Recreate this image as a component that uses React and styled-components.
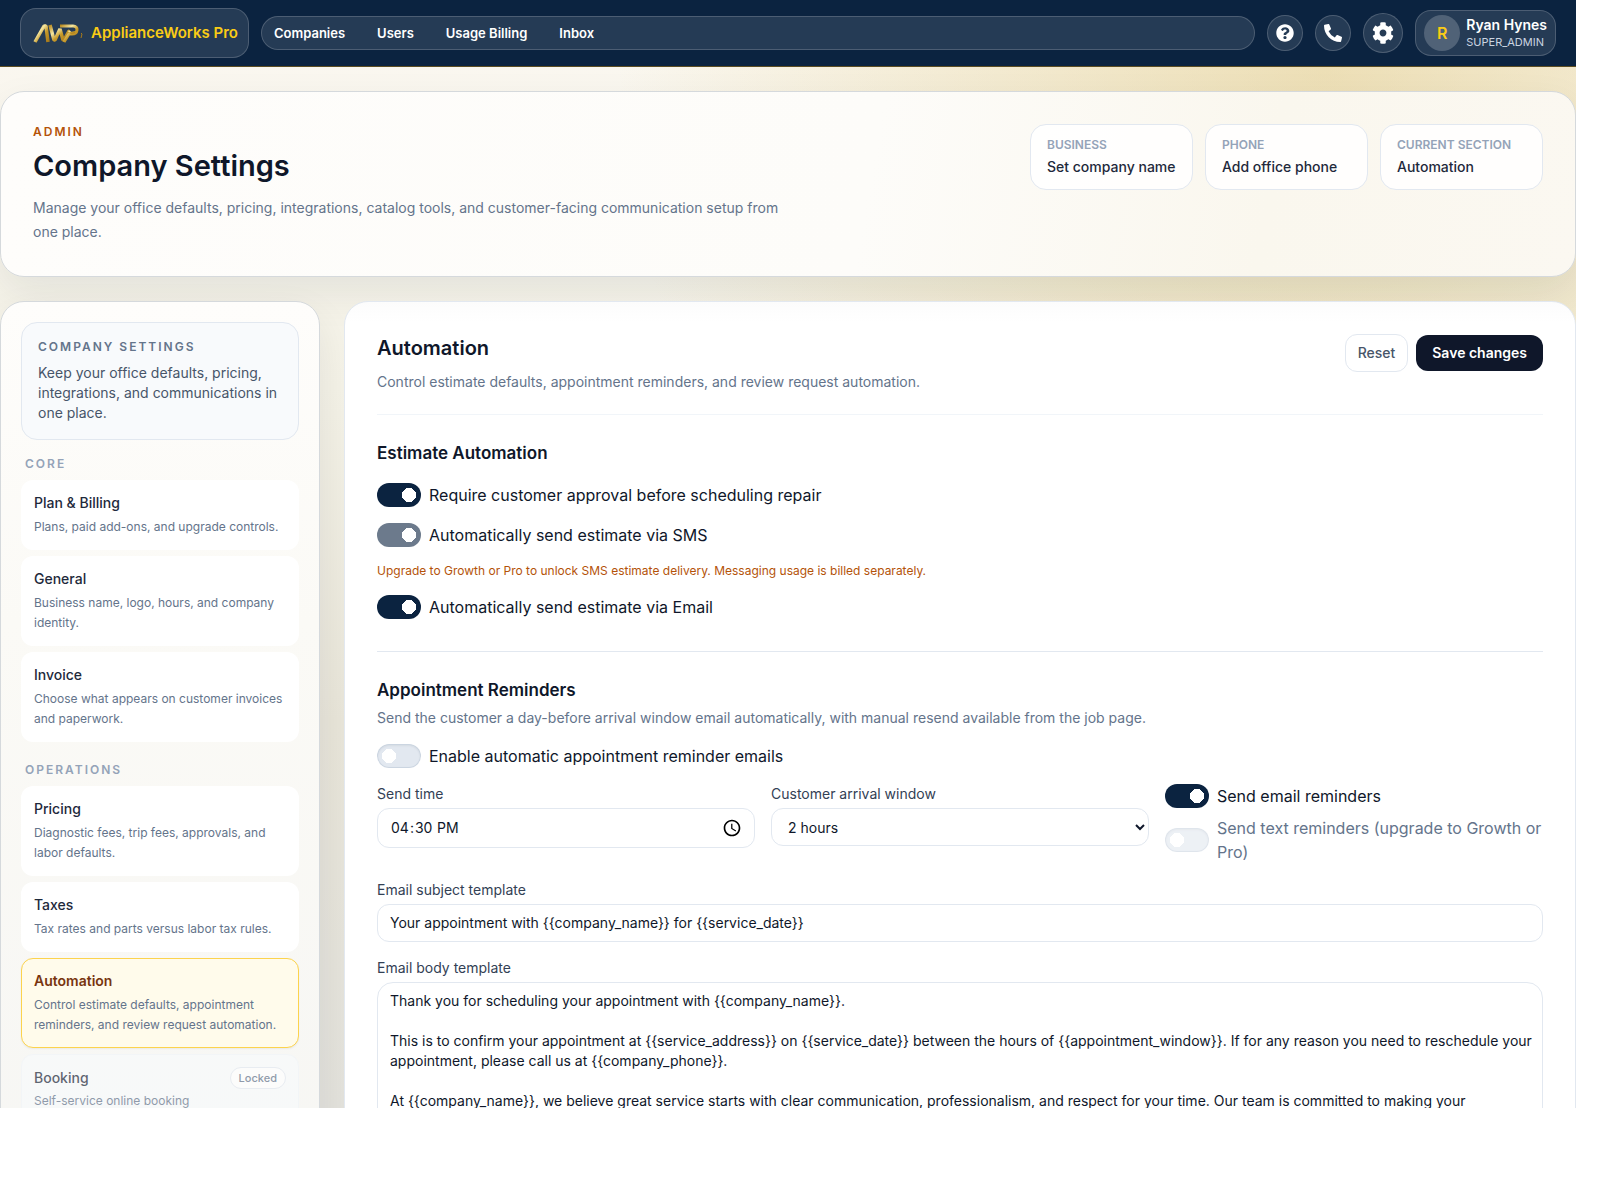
import { useState } from "react";
import styled, { createGlobalStyle, css } from "styled-components";
import { FaPhoneAlt, FaQuestionCircle, FaCog } from "react-icons/fa";

const GlobalStyle = createGlobalStyle`
  *, *::before, *::after {
    box-sizing: border-box;
  }
  body {
    margin: 0;
    background: #fff;
    color: #0f172a;
    font-family: Inter, "Open Sans", sans-serif;
    font-size: 16px;
    line-height: 24px;
  }
  button, input, select, textarea {
    font: inherit;
    color: inherit;
  }
  h1, h2, h3, p {
    margin: 0;
  }
  a {
    color: inherit;
    text-decoration: none;
  }
`;

const Frame = styled.div`
  height: 100vh;
  padding: 0 24px 92px 0;
  overflow: hidden;
`;

const Shell = styled.div`
  height: 100%;
  overflow: hidden;
  background:
    radial-gradient(circle at 84% 6%, rgba(214, 180, 80, 0.36), transparent 42%),
    linear-gradient(180deg, #fbf8f1 0%, #f4f2e7 35%, #e8e5d9 65%, #e3e2dc 100%);
`;

const TopBar = styled.header`
  display: flex;
  align-items: center;
  gap: 12px;
  height: 67px;
  padding: 0 20px;
  background: #0b2340;
  border-bottom: 1px solid #5c4d22;
`;

const glass = css`
  background: rgba(255, 255, 255, 0.11);
  border: 1px solid rgba(255, 255, 255, 0.18);
`;

const Brand = styled.a`
  ${glass}
  display: flex;
  align-items: center;
  gap: 8px;
  height: 50px;
  padding: 0 10px 0 12px;
  border-radius: 16px;
  color: #facc15;
  font-size: 15px;
  font-weight: 600;
  white-space: nowrap;
`;

const Nav = styled.nav`
  ${glass}
  display: flex;
  flex: 1;
  align-items: center;
  gap: 8px;
  height: 34px;
  border-radius: 17px;
  a {
    padding: 0 12px;
    color: #fff;
    font-size: 13px;
    font-weight: 600;
  }
`;

const RoundButton = styled.button`
  ${glass}
  display: grid;
  place-items: center;
  width: ${(props) => props.$size}px;
  height: ${(props) => props.$size}px;
  padding: 0;
  border-radius: 50%;
  color: #fff;
  cursor: pointer;
`;

const UserChip = styled.button`
  ${glass}
  display: flex;
  align-items: center;
  gap: 6px;
  height: 46px;
  padding: 0 8px;
  border-radius: 16px;
  color: #fff;
  text-align: left;
  cursor: pointer;
`;

const Avatar = styled.span`
  display: grid;
  place-items: center;
  width: 36px;
  height: 36px;
  border-radius: 50%;
  background: rgba(255, 255, 255, 0.2);
  color: #facc15;
  font-weight: 600;
`;

const UserText = styled.span`
  display: flex;
  flex-direction: column;
  .name {
    font-size: 14px;
    font-weight: 600;
    line-height: 18px;
  }
  .role {
    color: #cbd5e1;
    font-size: 11px;
    line-height: 16px;
  }
`;

const Page = styled.main`
  display: flex;
  flex-direction: column;
  gap: 24px;
  padding-top: 24px;
`;

const Hero = styled.section`
  display: flex;
  justify-content: space-between;
  align-items: flex-start;
  gap: 24px;
  padding: 32px;
  border: 1px solid #d5d9dc;
  border-radius: 24px;
  background: linear-gradient(100deg, #fefdfb 0%, #fdfcf9 55%, #faf7ee 80%, #fbf8f1 100%);
  box-shadow: 0 16px 40px rgba(15, 23, 42, 0.08);
`;

const HeroText = styled.div`
  max-width: 768px;
  .eyebrow {
    color: #b45309;
    font-size: 12px;
    font-weight: 600;
    line-height: 16px;
    letter-spacing: 2px;
  }
  h1 {
    margin-top: 8px;
    font-size: 29px;
    font-weight: 600;
    line-height: 36px;
  }
  .summary {
    margin-top: 12px;
    color: #64748b;
    font-size: 14px;
  }
`;

const Stats = styled.div`
  display: grid;
  grid-template-columns: repeat(3, 163px);
  gap: 12px;
`;

const Stat = styled.div`
  padding: 12px 16px;
  border: 1px solid #e2e8f0;
  border-radius: 16px;
  background: rgba(255, 255, 255, 0.85);
  white-space: nowrap;
  .label {
    color: #94a3b8;
    font-size: 12px;
    font-weight: 600;
    line-height: 16px;
  }
  .value {
    margin-top: 4px;
    color: #1e293b;
    font-size: 14px;
    font-weight: 500;
    line-height: 20px;
  }
`;

const Columns = styled.div`
  display: grid;
  grid-template-columns: 320px 1fr;
  gap: 24px;
`;

const Sidebar = styled.aside`
  padding: 20px;
  border: 1px solid #d5d9dc;
  border-radius: 24px;
  background: linear-gradient(180deg, #fefdfb 0%, #fbfaf6 30%, #f5f5f3 100%);
  box-shadow: 0 16px 40px rgba(15, 23, 42, 0.08);
`;

const Intro = styled.div`
  padding: 16px;
  border: 1px solid #e2e8f0;
  border-radius: 16px;
  background: #f8fafc;
  color: #475569;
  .title {
    color: #64748b;
    font-size: 12px;
    font-weight: 600;
    line-height: 16px;
    letter-spacing: 2px;
  }
  .text {
    margin-top: 8px;
    font-size: 14px;
    line-height: 20px;
  }
`;

const Group = styled.nav`
  display: flex;
  flex-direction: column;
  gap: 6px;
  margin-top: ${(props) => (props.$first ? 16 : 20)}px;
  .heading {
    padding: 0 4px 2px;
    color: #94a3b8;
    font-size: 12px;
    font-weight: 600;
    line-height: 16px;
    letter-spacing: 2px;
  }
`;

const itemStates = {
  active: css`
    border-color: #fcd34d;
    background: #fffbeb;
    box-shadow: 0 1px 2px rgba(15, 23, 42, 0.06);
    .name {
      color: #78350f;
      font-weight: 600;
    }
  `,
  locked: css`
    border-color: #f1f5f9;
    background: #f8fafc;
    opacity: 0.7;
    .about {
      margin-top: 2px;
    }
  `,
};

const Item = styled.a`
  display: block;
  padding: 12px;
  border: 1px solid transparent;
  border-radius: 12px;
  background: #fff;
  .row {
    display: flex;
    align-items: center;
    justify-content: space-between;
  }
  .name {
    color: #1e293b;
    font-size: 14px;
    font-weight: 500;
    line-height: 20px;
  }
  .about {
    margin-top: 4px;
    color: #64748b;
    font-size: 12px;
    line-height: 20px;
  }
  ${(props) => itemStates[props.$state]}
`;

const Badge = styled.span`
  padding: 2px 8px;
  border: 1px solid #e2e8f0;
  border-radius: 12px;
  background: #fff;
  color: #64748b;
  font-size: 11px;
  font-weight: 500;
  line-height: 16px;
`;

const Panel = styled.section`
  min-width: 0;
  padding: 32px;
  border: 1px solid #e2e8f0;
  border-radius: 24px;
  background: linear-gradient(180deg, #fcfcfc 0, #fff 20px);
`;

const PanelHead = styled.div`
  display: flex;
  justify-content: space-between;
  align-items: flex-start;
  padding-bottom: 20px;
  border-bottom: 1px solid #f1f5f9;
  h2 {
    font-size: 20px;
    font-weight: 600;
    line-height: 28px;
  }
  p {
    margin-top: 8px;
    color: #64748b;
    font-size: 14px;
  }
`;

const Actions = styled.div`
  display: flex;
  align-items: center;
  gap: 8px;
`;

const Button = styled.button`
  padding: 8px 12px;
  border: 1px solid #e2e8f0;
  border-radius: 12px;
  background: #fff;
  color: #475569;
  font-size: 14px;
  font-weight: 500;
  line-height: 20px;
  cursor: pointer;
  ${(props) =>
    props.$primary &&
    css`
      padding: 8px 16px;
      border: 0;
      background: #0f172a;
      color: #fff;
      font-weight: 600;
    `}
`;

const Section = styled.section`
  display: flex;
  flex-direction: column;
  gap: 16px;
  padding: 24px 0 32px;
  & + & {
    border-top: 1px solid #e2e8f0;
  }
  h3 {
    font-size: 17px;
    font-weight: 600;
    line-height: 28px;
  }
  .lead {
    margin-top: 4px;
    color: #64748b;
    font-size: 14px;
    line-height: 20px;
  }
  .note {
    color: #b45309;
    font-size: 12px;
    line-height: 16px;
  }
`;

const ToggleLabel = styled.label`
  display: flex;
  align-items: center;
  gap: 8px;
  color: ${(props) => (props.$muted ? "#64748b" : "#0f172a")};
`;

const Switch = styled.input`
  flex: none;
  appearance: none;
  width: 44px;
  height: 24px;
  margin: 0;
  border-radius: 12px;
  background: radial-gradient(circle at 12px 12px, #fff 7px, transparent 7px) #e2e8f0;
  box-shadow: inset 0 0 0 1px #cbd5e1, inset 0 1px 3px rgba(15, 23, 42, 0.12);
  &:checked {
    background: radial-gradient(circle at 32px 12px, #fff 7px, transparent 7px) #0b2340;
    box-shadow: none;
  }
  &:disabled {
    opacity: 0.6;
  }
`;

const FieldGrid = styled.div`
  display: grid;
  grid-template-columns: repeat(3, 1fr);
  align-items: start;
  gap: 16px;
`;

const ToggleStack = styled.div`
  display: flex;
  flex-direction: column;
  gap: 8px;
`;

const FieldLabel = styled.label`
  display: flex;
  flex-direction: column;
  gap: 4px;
  color: #334155;
  font-size: 14px;
  line-height: 20px;
`;

const control = css`
  width: 100%;
  padding: 8px 12px;
  border: 1px solid #e2e8f0;
  border-radius: 12px;
  background: #fff;
  color: #0f172a;
  font-size: 14px;
  line-height: 20px;
`;

const Input = styled.input`
  ${control}
  &::-webkit-calendar-picker-indicator {
    width: 20px;
    height: 20px;
    padding: 0;
    background-size: 20px 20px;
  }
`;

const Select = styled.select`
  ${control}
  height: 38px;
`;

const TextArea = styled.textarea`
  ${control}
  display: block;
  height: 320px;
  padding-right: 4px;
  border-radius: 16px;
  resize: none;
`;

const groups = [
  {
    heading: "CORE",
    items: [
      { name: "Plan & Billing", about: "Plans, paid add-ons, and upgrade controls." },
      { name: "General", about: "Business name, logo, hours, and company identity." },
      { name: "Invoice", about: "Choose what appears on customer invoices and paperwork." },
    ],
  },
  {
    heading: "OPERATIONS",
    items: [
      { name: "Pricing", about: "Diagnostic fees, trip fees, approvals, and labor defaults." },
      { name: "Taxes", about: "Tax rates and parts versus labor tax rules." },
      {
        name: "Automation",
        about: "Control estimate defaults, appointment reminders, and review request automation.",
        state: "active",
      },
      { name: "Booking", about: "Self-service online booking", state: "locked" },
    ],
  },
];

const stats = [
  { label: "BUSINESS", value: "Set company name" },
  { label: "PHONE", value: "Add office phone" },
  { label: "CURRENT SECTION", value: "Automation" },
];

const emailBody = `Thank you for scheduling your appointment with {{company_name}}.

This is to confirm your appointment at {{service_address}} on {{service_date}} between the hours of {{appointment_window}}. If for any reason you need to reschedule your appointment, please call us at {{company_phone}}.

At {{company_name}}, we believe great service starts with clear communication, professionalism, and respect for your time. Our team is committed to making your`;

function Logo() {
  return (
    <svg width="50" height="22" viewBox="0 0 50 22" aria-hidden="true">
      <defs>
        <linearGradient id="gold" x1="0" y1="0" x2="1" y2="1">
          <stop offset="0" stopColor="#b98a1e" />
          <stop offset="0.35" stopColor="#f5e6a0" />
          <stop offset="0.6" stopColor="#c79a2b" />
          <stop offset="1" stopColor="#a87a1a" />
        </linearGradient>
      </defs>
      <g fill="none" stroke="url(#gold)" strokeLinejoin="bevel">
        <path d="M2 20 11 4h2l2 16" strokeWidth="3.500" />
        <path d="M4 16h10" strokeWidth="2" />
        <path d="m17 3 4 15h1l5-11 3 11h1l5-9" strokeWidth="3.500" />
        <path d="M27 4h13c6 0 5 8-1 8h-3l-5 8" strokeWidth="3" />
        <path d="m35 8 3 3 4-1" strokeWidth="2" />
      </g>
      <path d="m48 11 1 1-1 4" fill="none" stroke="#a87a1a" />
    </svg>
  );
}

function Toggle({ label, on = false, disabled, muted }) {
  const [checked, setChecked] = useState(on);
  return (
    <ToggleLabel $muted={muted}>
      <Switch
        type="checkbox"
        role="switch"
        checked={checked}
        disabled={disabled}
        onChange={() => setChecked(!checked)}
      />
      <span>{label}</span>
    </ToggleLabel>
  );
}

function Header() {
  return (
    <TopBar>
      <Brand href="#">
        <Logo />
        ApplianceWorks Pro
      </Brand>
      <Nav>
        <a href="#companies">Companies</a>
        <a href="#users">Users</a>
        <a href="#usage">Usage Billing</a>
        <a href="#inbox">Inbox</a>
      </Nav>
      <RoundButton $size={36} aria-label="Help">
        <FaQuestionCircle size={18} />
      </RoundButton>
      <RoundButton $size={36} aria-label="Call">
        <FaPhoneAlt size={18} />
      </RoundButton>
      <RoundButton $size={40} aria-label="Settings">
        <FaCog size={22} />
      </RoundButton>
      <UserChip>
        <Avatar>R</Avatar>
        <UserText>
          <span className="name">Ryan Hynes</span>
          <span className="role">SUPER_ADMIN</span>
        </UserText>
      </UserChip>
    </TopBar>
  );
}

function SettingsNav() {
  return (
    <Sidebar>
      <Intro>
        <div className="title">COMPANY SETTINGS</div>
        <p className="text">
          Keep your office defaults, pricing, integrations, and communications in one place.
        </p>
      </Intro>
      {groups.map((group, index) => (
        <Group key={group.heading} $first={index === 0}>
          <div className="heading">{group.heading}</div>
          {group.items.map((item) => (
            <Item key={item.name} href={`#${item.name}`} $state={item.state}>
              <div className="row">
                <span className="name">{item.name}</span>
                {item.state === "locked" && <Badge>Locked</Badge>}
              </div>
              <p className="about">{item.about}</p>
            </Item>
          ))}
        </Group>
      ))}
    </Sidebar>
  );
}

function AutomationPanel() {
  return (
    <Panel>
      <PanelHead>
        <div>
          <h2>Automation</h2>
          <p>Control estimate defaults, appointment reminders, and review request automation.</p>
        </div>
        <Actions>
          <Button>Reset</Button>
          <Button $primary>Save changes</Button>
        </Actions>
      </PanelHead>
      <Section>
        <h3>Estimate Automation</h3>
        <Toggle label="Require customer approval before scheduling repair" on />
        <Toggle label="Automatically send estimate via SMS" on disabled />
        <p className="note">
          Upgrade to Growth or Pro to unlock SMS estimate delivery. Messaging usage is billed
          separately.
        </p>
        <Toggle label="Automatically send estimate via Email" on />
      </Section>
      <Section>
        <div>
          <h3>Appointment Reminders</h3>
          <p className="lead">
            Send the customer a day-before arrival window email automatically, with manual resend
            available from the job page.
          </p>
        </div>
        <Toggle label="Enable automatic appointment reminder emails" />
        <FieldGrid>
          <FieldLabel>
            Send time
            <Input type="time" defaultValue="16:30" />
          </FieldLabel>
          <FieldLabel>
            Customer arrival window
            <Select defaultValue="2">
              <option value="2">2 hours</option>
              <option value="4">4 hours</option>
            </Select>
          </FieldLabel>
          <ToggleStack>
            <Toggle label="Send email reminders" on />
            <Toggle label="Send text reminders (upgrade to Growth or Pro)" disabled muted />
          </ToggleStack>
        </FieldGrid>
        <FieldLabel>
          Email subject template
          <Input
            type="text"
            defaultValue="Your appointment with {{company_name}} for {{service_date}}"
          />
        </FieldLabel>
        <FieldLabel>
          Email body template
          <TextArea defaultValue={emailBody} />
        </FieldLabel>
      </Section>
    </Panel>
  );
}

export default function App() {
  return (
    <Frame>
      <GlobalStyle />
      <Shell>
        <Header />
        <Page>
          <Hero>
            <HeroText>
              <div className="eyebrow">ADMIN</div>
              <h1>Company Settings</h1>
              <p className="summary">
                Manage your office defaults, pricing, integrations, catalog tools, and
                customer-facing communication setup from one place.
              </p>
            </HeroText>
            <Stats>
              {stats.map((stat) => (
                <Stat key={stat.label}>
                  <div className="label">{stat.label}</div>
                  <div className="value">{stat.value}</div>
                </Stat>
              ))}
            </Stats>
          </Hero>
          <Columns>
            <SettingsNav />
            <AutomationPanel />
          </Columns>
        </Page>
      </Shell>
    </Frame>
  );
}
